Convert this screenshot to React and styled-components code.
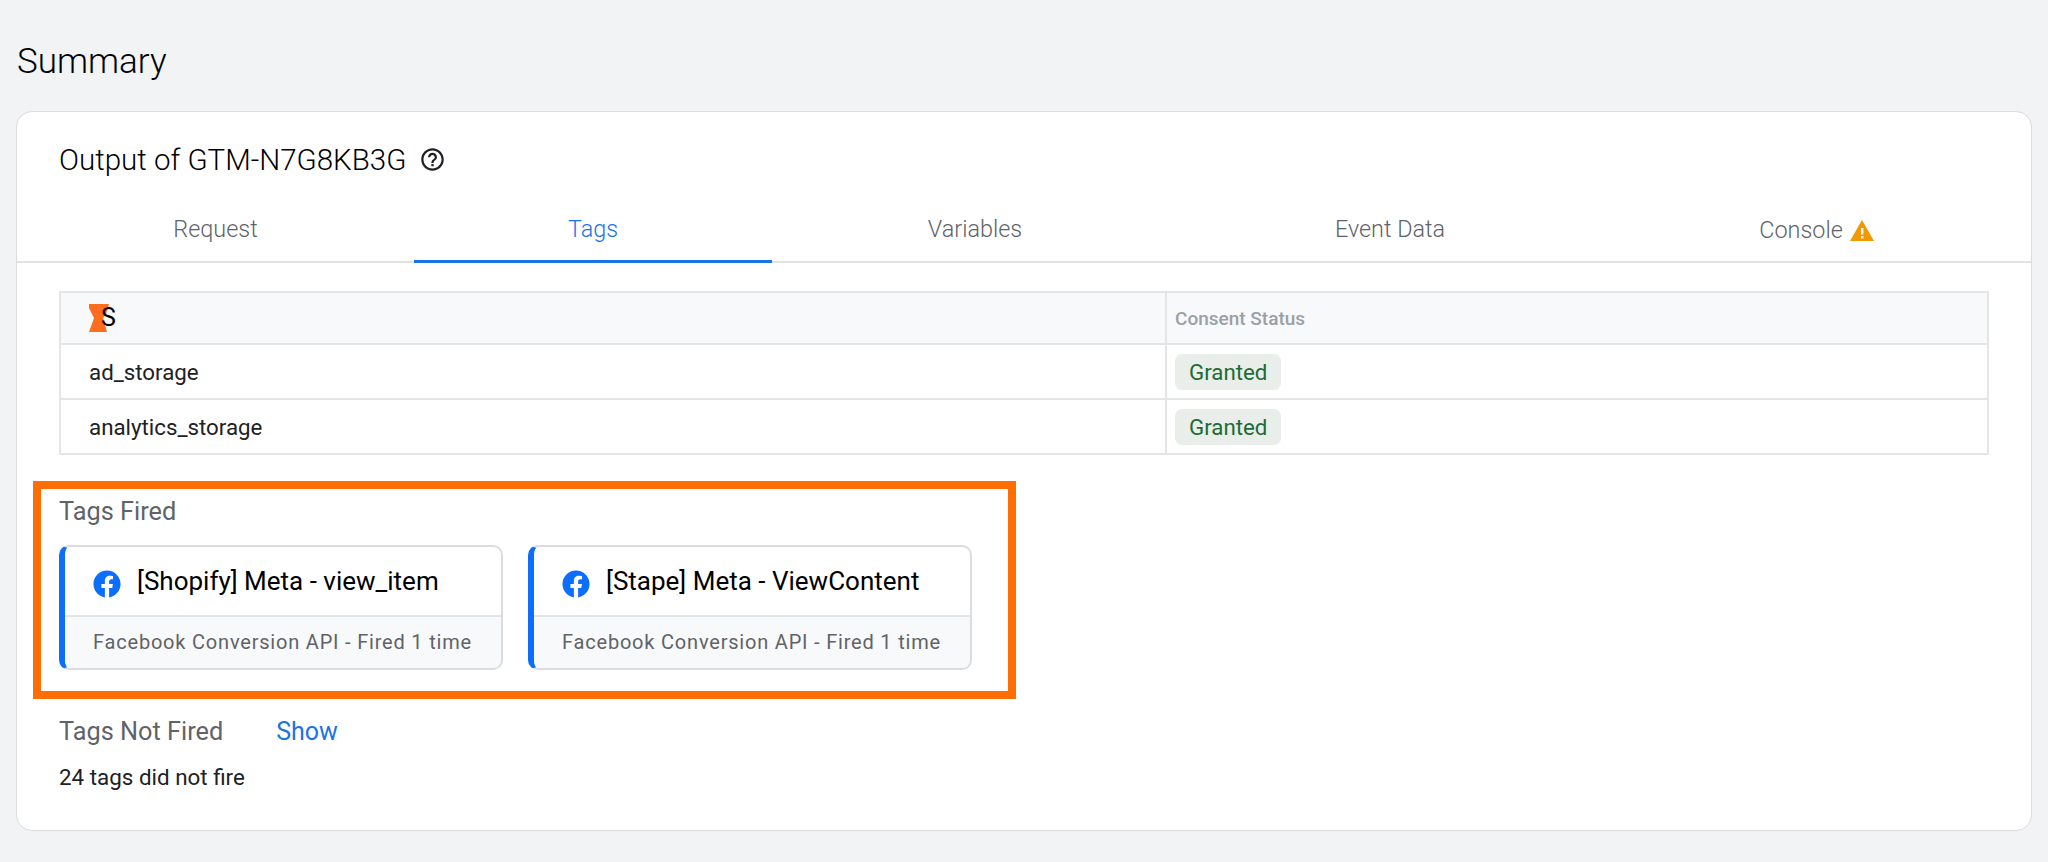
import React from "react";
import styled, { createGlobalStyle } from "styled-components";
import { FaFacebook } from "react-icons/fa";
import { MdHelpOutline } from "react-icons/md";

const GlobalStyle = createGlobalStyle`
  html, body {
    margin: 0;
    background: #f1f3f4;
    font-family: Roboto, "Liberation Sans", sans-serif;
    color: #202124;
  }
  * { box-sizing: border-box; }
`;

const Page = styled.div`
  width: 2048px;
  height: 862px;
  padding: 0 16px;
  overflow: hidden;
`;

const PageTitle = styled.h1`
  margin: 0;
  height: 111px;
  padding: 42px 0 0 1px;
  font-size: 35px;
  line-height: 40px;
  font-weight: 300;
  color: #000;
`;

const Card = styled.div`
  height: 720px;
  background: #fff;
  border: 1px solid #dadce0;
  border-radius: 16px;
`;

const CardHead = styled.div`
  display: flex;
  align-items: center;
  gap: 13px;
  height: 95px;
  padding: 0 0 0 42px;
  font-size: 29.5px;
  font-weight: 300;
  color: #000;
  svg { color: #202124; }
`;

const Tabs = styled.div`
  display: grid;
  grid-template-columns: 397px 358px 406px 424px 1fr;
  height: 56px;
  border-bottom: 2px solid #e0e2e4;
`;

const Tab = styled.div`
  display: flex;
  align-items: center;
  justify-content: center;
  gap: 7px;
  height: 56px;
  padding-bottom: ${(p) => (p.$low ? "7px" : "10px")};
  font-size: 23.4px;
  font-weight: 300;
  color: ${(p) => (p.$active ? "#1a73e8" : "#5f6368")};
  border-bottom: 3px solid ${(p) => (p.$active ? "#1a73e8" : "transparent")};
`;

const Body = styled.div`
  padding: 28px 42px 0;
`;

const Table = styled.table`
  width: 1930px;
  border-collapse: collapse;
  table-layout: fixed;
  font-size: 22.3px;
  td, th {
    border: 2px solid #e3e5e7;
    padding: 0 0 0 8px;
    text-align: left;
  }
  td:first-child, th:first-child {
    width: 1106px;
    padding-left: 28px;
  }
  td:last-child, th:last-child {
    border-left-width: 1px;
  }
  th:last-child {
    padding-bottom: 3px;
  }
`;

const HeadRow = styled.tr`
  height: 52px;
  background: #f8f9fa;
`;

const Row = styled.tr`
  height: 55px;
`;

const ColLabel = styled.span`
  font-size: 19px;
  font-weight: 500;
  color: #9aa0a6;
`;

const Logo = styled.div`
  display: flex;
  align-items: center;
  height: 28px;
`;

const LogoLetter = styled.span`
  margin-left: -8px;
  font-size: 25px;
  line-height: 28px;
  font-weight: 400;
  color: #000;
`;

const Badge = styled.span`
  display: inline-block;
  height: 36px;
  padding: 0 14px;
  line-height: 36px;
  font-size: 22.3px;
  font-weight: 400;
  border-radius: 7px;
  background: #e9eeea;
  color: #1e6b34;
`;

const Highlight = styled.section`
  width: 983px;
  height: 218px;
  margin: 26px 0 0 -26px;
  padding: 6px 0 0 18px;
  border: 8px solid #ff6d05;
`;

const SectionTitle = styled.div`
  font-size: 25.3px;
  line-height: 34px;
  font-weight: 400;
  color: #5f6368;
`;

const TagRow = styled.div`
  display: flex;
  gap: 25px;
  margin-top: 16px;
`;

const TagCard = styled.div`
  width: 444px;
  height: 125px;
  border: 2px solid #dadce0;
  border-left: 6px solid #0d6efd;
  border-radius: 10px;
  overflow: hidden;
`;

const TagTitle = styled.div`
  display: flex;
  align-items: center;
  gap: 16px;
  height: 68px;
  padding-left: 28px;
  font-size: 26px;
  color: #000;
  svg { margin-top: 5px; color: #0d6efd; flex: none; }
`;

const TagFooter = styled.div`
  height: 53px;
  padding-left: 28px;
  line-height: 51px;
  border-top: 2px solid #e3e5e7;
  background: #f8f9fa;
  font-size: 20px;
  letter-spacing: 0.8px;
  color: #5f6368;
`;

const NotFiredRow = styled.div`
  display: flex;
  align-items: center;
  gap: 53px;
  margin-top: 16px;
`;

const ShowLink = styled.a`
  font-size: 25px;
  line-height: 34px;
  color: #1a73e8;
`;

const NotFiredText = styled.div`
  margin-top: 14px;
  font-size: 22.4px;
  line-height: 28px;
  color: #202124;
`;

const tags = ["[Shopify] Meta - view_item", "[Stape] Meta - ViewContent"];
const consents = ["ad_storage", "analytics_storage"];
const tabs = ["Request", "Tags", "Variables", "Event Data"];

export default function App() {
  return (
    <Page>
      <GlobalStyle />
      <PageTitle>Summary</PageTitle>
      <Card>
        <CardHead>
          Output of GTM-N7G8KB3G
          <MdHelpOutline size={27} />
        </CardHead>
        <Tabs>
          {tabs.map((t) => (
            <Tab key={t} $active={t === "Tags"}>
              {t}
            </Tab>
          ))}
          <Tab $low>
            Console
            <svg width="24" height="21" viewBox="0 0 24 21">
              <path d="M12 0L24 21H0z" fill="#f29900" />
              <rect x="11" y="8" width="2.4" height="6.5" fill="#fff" />
              <rect x="11" y="16" width="2.4" height="2.4" fill="#fff" />
            </svg>
          </Tab>
        </Tabs>
        <Body>
          <Table>
            <thead>
              <HeadRow>
                <th>
                  <Logo>
                    <svg width="20" height="28" viewBox="0 0 20 28">
                      <path
                        d="M0 0H20L17 10L14 14L18 28H0L5 14L0 4z"
                        fill="#ff6d1f"
                      />
                    </svg>
                    <LogoLetter>S</LogoLetter>
                  </Logo>
                </th>
                <th>
                  <ColLabel>Consent Status</ColLabel>
                </th>
              </HeadRow>
            </thead>
            <tbody>
              {consents.map((c) => (
                <Row key={c}>
                  <td>{c}</td>
                  <td>
                    <Badge>Granted</Badge>
                  </td>
                </Row>
              ))}
            </tbody>
          </Table>
          <Highlight>
            <SectionTitle>Tags Fired</SectionTitle>
            <TagRow>
              {tags.map((t) => (
                <TagCard key={t}>
                  <TagTitle>
                    <FaFacebook size={28} />
                    {t}
                  </TagTitle>
                  <TagFooter>Facebook Conversion API - Fired 1 time</TagFooter>
                </TagCard>
              ))}
            </TagRow>
          </Highlight>
          <NotFiredRow>
            <SectionTitle>Tags Not Fired</SectionTitle>
            <ShowLink>Show</ShowLink>
          </NotFiredRow>
          <NotFiredText>24 tags did not fire</NotFiredText>
        </Body>
      </Card>
    </Page>
  );
}
